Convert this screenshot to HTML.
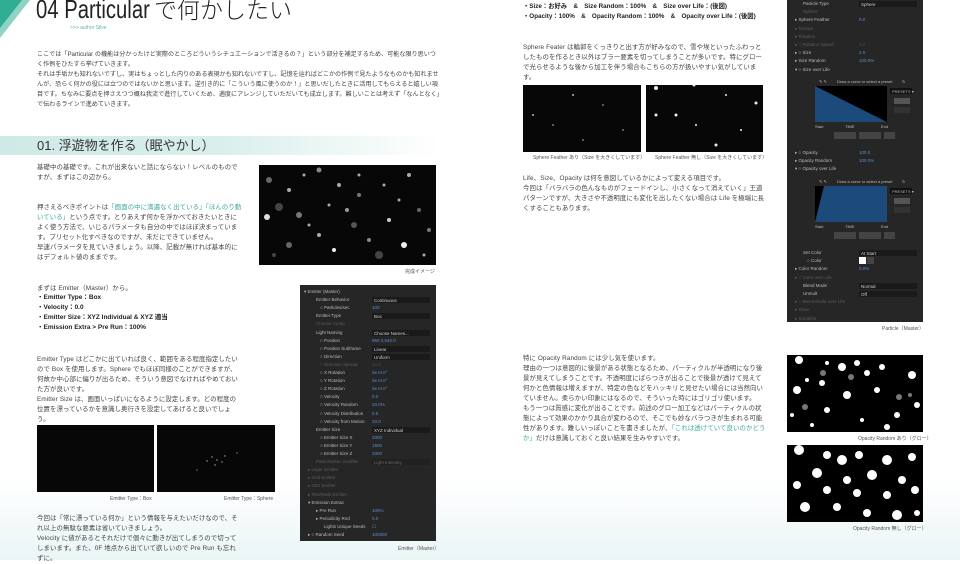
<!DOCTYPE html>
<html><head><meta charset="utf-8"><style>
*{margin:0;padding:0;box-sizing:border-box}
body{width:960px;height:560px;position:relative;overflow:hidden;background:#fff;font-family:"Liberation Sans","Noto Sans CJK JP",sans-serif;color:#333}
.a{position:absolute}
.t{font-size:6.4px;line-height:10px;color:#444;letter-spacing:.1px}
.b{font-size:7.5px;line-height:10px;font-weight:bold;color:#222}
.g{color:#3aa99a}
.cap{font-size:5px;color:#555;position:absolute}
.img{position:absolute;background:#070707}
.pan{position:absolute;background:#262626;font-size:4.5px;color:#bbb}
.r{position:absolute;left:0;right:0;height:8px;line-height:8px}
.r span{position:absolute}
.v{color:#5b8fd0}
.d{background:#1a1a1a;height:6px;top:1px;border-radius:1px}
</style></head><body>
<div class="a" style="left:0;top:480px;width:480px;height:80px;background:linear-gradient(#fff,#eaf5f5)"></div>
<div class="a" style="left:480px;top:480px;width:480px;height:80px;background:linear-gradient(#fff,#eaf5f5)"></div>
<svg class="a" style="left:0;top:0" width="40" height="45"><polygon points="0,0 30,0 0,38" fill="#8fd3c4"/><polygon points="0,0 22,0 0,28" fill="#2fae94"/></svg>
<div class="a" style="left:36px;top:-6px;font-size:26px;line-height:30px;color:#222;font-weight:300;transform:scaleX(.78);transform-origin:0 0;white-space:nowrap">04 Particular</div>
<div class="a" style="left:154px;top:-4px;font-size:23px;line-height:28px;color:#222;font-weight:300;white-space:nowrap">で何かしたい</div>
<div class="a" style="left:70px;top:25px;font-size:5px;color:#5bb8a8">&gt;&gt;&gt; author Silve</div>
<div class="a t" style="left:37px;top:50px;width:404px;font-size:6.1px;letter-spacing:0">ここでは「Particular の機能は分かったけど実際のところどういうシチュエーションで活きるの？」という部分を補足するため、可能な限り思いつく作例をひたすら挙げていきます。<br>それは手垢かも知れないですし、実はちょっとした内りのある表現かも知れないですし、記憶を辿ればどこかの作例で見たようなものかも知れませんが、恐らく何かの役には立つのではないかと思います。逆引き的に「こういう風に使うのか！」と思いだしたときに活用してもらえると嬉しい項目です。ちなみに要点を押さえつつ概ね我流で進行していくため、適度にアレンジしていただいても成立します。難しいことは考えず「なんとなく」で伝わるラインで進めていきます。</div>
<div class="a" style="left:0;top:136px;width:440px;height:19px;background:linear-gradient(90deg,#cfe9e6,#d9efec 50%,#fff)"></div>
<div class="a" style="left:37px;top:137px;font-size:13px;line-height:17px;color:#333">01. 浮遊物を作る（眠やかし）</div>
<div class="a t" style="left:37px;top:163px;width:205px">基礎中の基礎です。これが出来ないと話にならない！レベルのものですが、まずはこの辺から。</div>
<div class="a t" style="left:37px;top:203px;width:205px">押さえるべきポイントは<span class="g">「画面の中に満遍なく出ている」「ほんのり動いている」</span>という点です。とりあえず何かを浮かべておきたいときによく使う方法で、いじるパラメータも自分の中ではほぼ決まっています。プリセット化すべきなのですが、未だにできていません。<br>早速パラメータを見ていきましょう。以降、記載が無ければ基本的にはデフォルト値のままです。</div>
<div class="img" style="left:259px;top:165px;width:177px;height:100px"><svg width="177" height="100"><g fill="#aaa">
<circle cx="60" cy="5" r="2.5" fill="#888"/><circle cx="10" cy="15" r="3" fill="#666"/><circle cx="30" cy="25" r="2"/><circle cx="45" cy="10" r="1.5"/><circle cx="80" cy="20" r="2"/><circle cx="70" cy="40" r="1.5"/><circle cx="40" cy="50" r="3" fill="#777"/><circle cx="20" cy="42" r="4" fill="#444"/><circle cx="8" cy="52" r="3" fill="#ddd"/><circle cx="100" cy="30" r="2" fill="#777"/><circle cx="125" cy="20" r="1.5"/><circle cx="150" cy="10" r="2"/><circle cx="160" cy="45" r="2" fill="#666"/><circle cx="130" cy="55" r="2" fill="#ccc"/><circle cx="95" cy="60" r="3" fill="#555"/><circle cx="110" cy="75" r="2" fill="#888"/><circle cx="60" cy="70" r="2"/><circle cx="30" cy="80" r="3" fill="#666"/><circle cx="75" cy="85" r="2" fill="#eee"/><circle cx="145" cy="80" r="3" fill="#eee"/><circle cx="170" cy="65" r="2" fill="#777"/><circle cx="120" cy="90" r="4" fill="#444"/><circle cx="50" cy="60" r="1.5"/><circle cx="88" cy="45" r="2" fill="#999"/><circle cx="140" cy="35" r="1.5"/><circle cx="100" cy="10" r="1.5"/><circle cx="165" cy="90" r="1.5"/><circle cx="15" cy="90" r="2" fill="#444"/></g></svg></div>
<div class="cap" style="left:405px;top:268px">完成イメージ</div>
<div class="a t" style="left:37px;top:284px">まずは Emitter（Master）から。</div>
<div class="a b" style="left:37px;top:293px;font-size:6.5px">・Emitter Type：Box<br>・Velocity：0.0<br>・Emitter Size：XYZ Individual &amp; XYZ 適当<br>・Emission Extra &gt; Pre Run：100%</div>
<div class="a t" style="left:37px;top:355px;width:205px">Emitter Type はどこかに出ていれば良く、範囲をある程度指定したいので Box を使用します。Sphere でもほぼ同様のことができますが、何故か中心部に偏りが出るため、そういう意図でなければやめておいた方が良いです。<br>Emitter Size は、画面いっぱいになるように設定します。どの程度の位置を漂っているかを意識し奥行きを設定してあげると良いでしょう。</div>
<div class="img" style="left:37px;top:425px;width:117px;height:67px"></div>
<div class="img" style="left:157px;top:425px;width:118px;height:67px"><svg width="118" height="67"><g fill="#aaa"><circle cx="60" cy="35" r=".7"/><circle cx="55" cy="32" r=".7"/><circle cx="65" cy="37" r=".7"/><circle cx="58" cy="40" r=".7"/><circle cx="50" cy="36" r=".7"/><circle cx="68" cy="31" r=".7"/><circle cx="40" cy="45" r=".6"/><circle cx="80" cy="28" r=".6"/></g></svg></div>
<div class="cap" style="left:110px;top:495px">Emitter Type：Box</div>
<div class="cap" style="left:224px;top:495px">Emitter Type：Sphere</div>
<div class="a t" style="left:37px;top:514px;width:205px">今回は「常に漂っている何か」という情報を与えたいだけなので、それ以上の無駄な要素は省いていきましょう。<br>Velocity に値があるとそれだけで個々に動きが出てしまうので切ってしまいます。また、0F 地点から出ていて欲しいので Pre Run も忘れずに。</div>
<div class="pan" style="left:300px;top:285px;width:136px;height:256px" id="p1"></div>
<div class="cap" style="left:398px;top:545px">Emitter（Master）</div>
<div class="a b" style="left:523px;top:2px;font-size:6.3px">・Size：お好み　&amp;　Size Random：100%　&amp;　Size over Life：(後図)<br>・Opacity：100%　&amp;　Opacity Random：100%　&amp;　Opacity over Life：(後図)</div>
<div class="a t" style="left:523px;top:43px;width:243px">Sphere Feater は輪郭をくっきりと出す方が好みなので、雪や埃といったふわっとしたものを作るとき以外はブラー要素を切ってしまうことが多いです。特にグローで光らせるような後から加工を伴う場合もこちらの方が扱いやすい気がしています。</div>
<div class="img" style="left:523px;top:85px;width:118px;height:67px"><svg width="118" height="67"><g fill="#bbb"><circle cx="50" cy="10" r="1"/><circle cx="10" cy="30" r="1"/><circle cx="30" cy="40" r=".8"/><circle cx="80" cy="20" r=".8"/><circle cx="100" cy="45" r=".8"/><circle cx="60" cy="55" r=".8"/></g></svg></div>
<div class="img" style="left:646px;top:85px;width:117px;height:67px"><svg width="117" height="67"><g fill="#eee"><circle cx="10" cy="3" r="2"/><circle cx="48" cy="0" r="1.5"/><circle cx="30" cy="30" r="1.5"/><circle cx="80" cy="10" r="1"/><circle cx="110" cy="18" r="1.5"/><circle cx="10" cy="30" r="1.5"/><circle cx="50" cy="40" r="1"/><circle cx="95" cy="45" r="1"/><circle cx="70" cy="60" r="1.5"/></g></svg></div>
<div class="cap" style="left:533px;top:154px">Sphere Feather あり（Size を大きくしています）</div>
<div class="cap" style="left:655px;top:154px">Sphere Feather 無し（Size を大きくしています）</div>
<div class="a t" style="left:523px;top:174px;width:243px">Life、Size、Opacity は何を意図しているかによって変える項目です。<br>今回は「バラバラの色んなものがフェードインし、小さくなって消えていく」王道パターンですが、大きさや不透明度にも変化を出したくない場合は Life を極端に長くすることもあります。</div>
<div class="pan" style="left:787px;top:0;width:136px;height:322px" id="p2"></div>
<div class="cap" style="left:882px;top:325px">Particle（Master）</div>
<div class="a t" style="left:523px;top:354px;width:243px">特に Opacity Random には少し気を使います。<br>理由の一つは意図的に後景がある状態となるため、パーティクルが半透明になり後景が見えてしまうことです。不透明度にばらつきが出ることで後景が透けて見えて何かと色情報は増えますが、特定の色などをハッキリと見せたい場合には当然向いていません。柔らかい印象にはなるので、そういった時にはゴリゴリ使います。<br>もう一つは質感に変化が出ることです。前述のグロー加工などはパーティクルの状態によって効果のかかり具合が変わるので、そこでも妙なバラつきが生まれる可能性があります。難しいっぽいことを書きましたが、<span class="g">「これは透けていて良いのかどうか」</span>だけは意識しておくと良い結果を生みやすいです。</div>
<div class="img" style="left:787px;top:355px;width:136px;height:77px;background:#000"><svg width="136" height="77"><g fill="#fff"><circle cx="12" cy="5" r="4"/><circle cx="40" cy="8" r="2"/><circle cx="55" cy="12" r="4"/><circle cx="70" cy="8" r="3"/><circle cx="95" cy="12" r="3"/><circle cx="125" cy="20" r="4"/><circle cx="35" cy="28" r="3"/><circle cx="20" cy="25" r="2"/><circle cx="80" cy="18" r="3"/><circle cx="10" cy="35" r="4"/><circle cx="60" cy="40" r="4"/><circle cx="90" cy="35" r="3"/><circle cx="130" cy="50" r="3"/><circle cx="40" cy="55" r="3"/><circle cx="110" cy="60" r="3"/><circle cx="75" cy="65" r="2"/><circle cx="25" cy="70" r="2"/><circle cx="100" cy="72" r="3"/><circle cx="5" cy="60" r="2"/></g><g fill="#777"><circle cx="36" cy="18" r="3"/><circle cx="64" cy="22" r="3"/><circle cx="18" cy="52" r="3"/><circle cx="112" cy="42" r="3"/><circle cx="123" cy="40" r="2"/></g></svg></div>
<div class="cap" style="left:858px;top:435px">Opacity Random あり（グロー）</div>
<div class="img" style="left:787px;top:445px;width:136px;height:77px;background:#000"><svg width="136" height="77"><g fill="#fff"><circle cx="12" cy="5" r="5"/><circle cx="40" cy="10" r="4"/><circle cx="55" cy="15" r="5"/><circle cx="72" cy="10" r="4"/><circle cx="100" cy="15" r="5"/><circle cx="125" cy="12" r="4"/><circle cx="30" cy="28" r="5"/><circle cx="60" cy="35" r="4"/><circle cx="85" cy="30" r="5"/><circle cx="115" cy="35" r="4"/><circle cx="10" cy="40" r="4"/><circle cx="40" cy="45" r="4"/><circle cx="70" cy="48" r="4"/><circle cx="100" cy="50" r="4"/><circle cx="128" cy="45" r="4"/><circle cx="18" cy="62" r="5"/><circle cx="50" cy="62" r="4"/><circle cx="80" cy="68" r="4"/><circle cx="110" cy="70" r="5"/><circle cx="130" cy="68" r="3"/></g></svg></div>
<div class="cap" style="left:853px;top:525px">Opacity Random 無し（グロー）</div>
<script>
function build(id,rows,top,h){var p=document.getElementById(id),s='';rows.forEach(function(r,i){var y=top+i*h;
var dim=r[2]?'opacity:.35;':'';s+='<div class="r" style="top:'+y+'px;'+dim+'"><span style="left:'+(r[3]||16)+'px">'+r[0]+'</span>'+(r[1]?'<span class="'+(r[1].charAt(0)=='#'?'d':'v')+'" style="left:72px;'+(r[1].charAt(0)=='#'?'width:58px;':'')+'">'+(r[1].charAt(0)=='#'?'<span style="left:2px;color:#ccc">'+r[1].slice(1)+'</span>':r[1])+'</span>':'')+'</div>'});p.innerHTML+=s}
build('p1',[["▾ Emitter (Master)","",0,4],["Emitter Behavior","#Continuous"],["○ Particles/sec","100",0,20],["Emitter Type","#Box"],["Choose Comp","",1],["Light Naming","#Choose Names..."],["○ Position","960.0,540.0",0,20],["○ Position Subframe","#Linear",0,20],["○ Direction","#Uniform",0,20],["○ Direction Spread","10.0",1,20],["○ X Rotation","0x+0.0°",0,20],["○ Y Rotation","0x+0.0°",0,20],["○ Z Rotation","0x+0.0°",0,20],["○ Velocity","0.0",0,20],["○ Velocity Random","20.0%",0,20],["○ Velocity Distribution","0.5",0,20],["○ Velocity from Motion","20.0",0,20],["Emitter Size","#XYZ Individual"],["○ Emitter Size X","2000",0,20],["○ Emitter Size Y","1500",0,20],["○ Emitter Size Z","2000",0,20],["Particles/sec modifier","#Light Intensity",1],["▸ Layer Emitter","",1,8],["▸ Grid Emitter","",1,8],["▸ OBJ Emitter","",1,8],["▸ Text/Mask Emitter","",1,8],["▾ Emission Extras","",0,8],["▸ Pre Run","100%",0,16],["▸ Periodicity Rnd","0.0",0,16],["Lights Unique Seeds","☐",0,24],["▸ ○ Random Seed","100000",0,8]],3,8.1);
build('p2',[["Particle Type","#Sphere"],["Sphere","",1],["▸ Sphere Feather","0.0",0,8],["▸ Texture","",1,8],["▸ Rotation","",1,8],["▸ ○ Rotation Speed","0.0",1,8],["▸ ○ Size","2.0",0,8],["▸ Size Random","100.0%",0,8],["▾ ○ Size over Life","",0,8]],0,8.2);
build('p2',[["▸ ○ Opacity","100.0",0,8],["▸ Opacity Random","100.0%",0,8],["▾ ○ Opacity over Life","",0,8]],149,8.2);
build('p2',[["Set Color","#At Start"],["○ Color","",0,20],["▸ Color Random","0.0%",0,8],["▸ ○ Color over Life","",1,8],["Blend Mode","#Normal"],["Unmult","#Off"],["▸ ○ Blend Mode over Life","",1,8],["▸ Glow","",1,8],["▸ Streaklet","",1,8]],249,8.2);
</script>
<svg class="a" style="left:787px;top:0" width="136" height="322">
<g font-size="4" fill="#bbb" font-family="Liberation Sans">
<text x="32" y="83">✎ ✎</text><text x="50" y="83">Draw a curve or select a preset</text><text x="115" y="83">↻</text>
<rect x="28" y="86" width="72" height="36" fill="#000"/><polygon points="28,86 100,122 28,122" fill="#1c4a7a"/>
<rect x="103" y="88" width="22" height="6" fill="#111"/><text x="105" y="93">PRESETS ▾</text>
<rect x="107" y="98" width="16" height="6" fill="#555"/><rect x="107" y="107" width="16" height="6" fill="#333"/>
<text x="28" y="128">Start</text><text x="58" y="128">TIME</text><text x="94" y="128">End</text>
<rect x="47" y="132" width="22" height="7" fill="#444"/><rect x="72" y="132" width="22" height="7" fill="#444"/><rect x="97" y="132" width="11" height="7" fill="#444"/>
<text x="32" y="183">✎ ✎</text><text x="50" y="183">Draw a curve or select a preset</text><text x="115" y="183">↻</text>
<rect x="28" y="186" width="72" height="36" fill="#1c4a7a"/><polygon points="28,186 37,186 28,222" fill="#000"/>
<rect x="103" y="188" width="22" height="6" fill="#111"/><text x="105" y="193">PRESETS ▾</text>
<rect x="107" y="198" width="16" height="6" fill="#555"/><rect x="107" y="207" width="16" height="6" fill="#333"/>
<text x="28" y="228">Start</text><text x="58" y="228">TIME</text><text x="94" y="228">End</text>
<rect x="47" y="232" width="22" height="7" fill="#444"/><rect x="72" y="232" width="22" height="7" fill="#444"/><rect x="97" y="232" width="11" height="7" fill="#444"/>
<rect x="72" y="257" width="7" height="7" fill="#fff"/><rect x="80" y="257" width="7" height="7" fill="#444"/>
</g></svg>
</body></html>
